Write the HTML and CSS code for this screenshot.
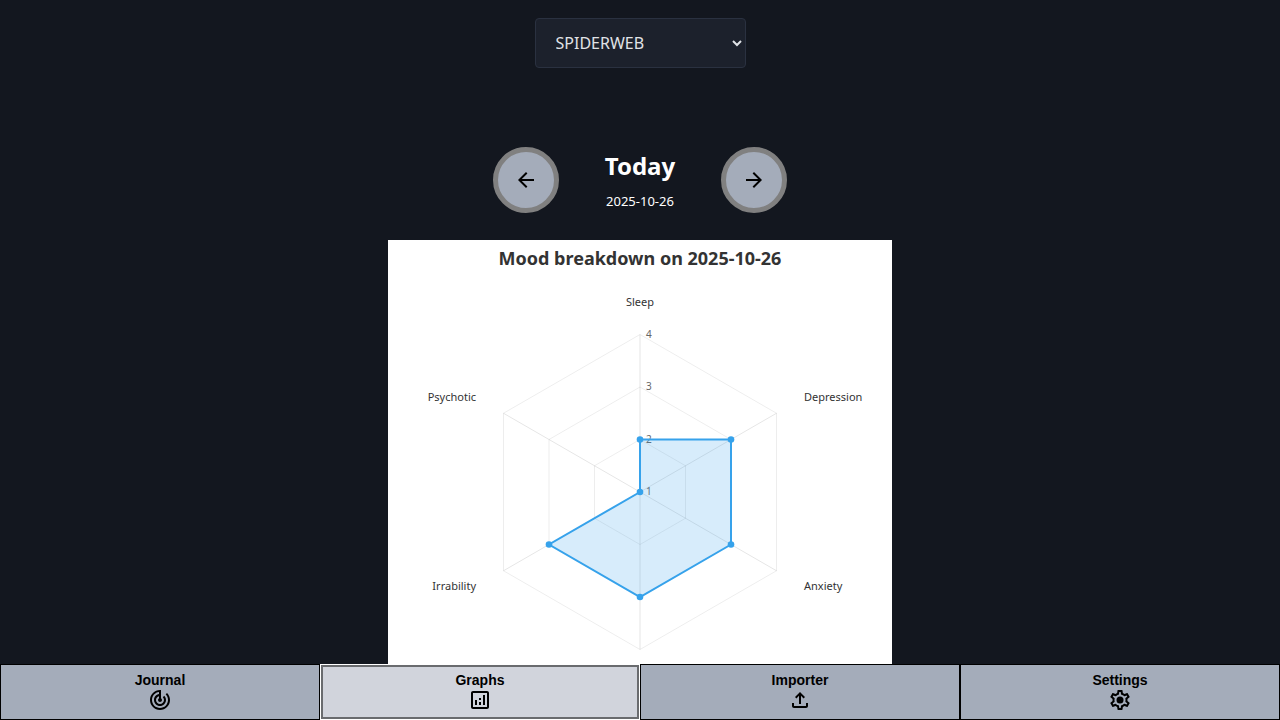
FILE: index.html
```html
<!DOCTYPE html>
<html lang="en">
<head>
<meta charset="utf-8">
<meta name="viewport" content="width=device-width, initial-scale=1">
<title>Graphs</title>
<link rel="stylesheet" href="styles.css">
</head>
<body>
<main class="page">
  <select class="graph-select" aria-label="Graph type">
    <option selected>SPIDERWEB</option>
    <option>LINE CHART</option>
  </select>
  <section class="day-picker">
    <button class="round-button" type="button" aria-label="Previous day">
      <svg class="icon" viewBox="0 0 24 24"><path d="M20 11H7.83l5.59-5.59L12 4l-8 8 8 8 1.41-1.41L7.83 13H20v-2z"/></svg>
    </button>
    <div class="day">
      <h2 class="day-name">Today</h2>
      <time class="day-date" datetime="2025-10-26">2025-10-26</time>
    </div>
    <button class="round-button" type="button" aria-label="Next day">
      <svg class="icon" viewBox="0 0 24 24"><path d="M12 4l-1.41 1.41L16.17 11H4v2h12.17l-5.58 5.59L12 20l8-8z"/></svg>
    </button>
  </section>
  <svg class="chart" viewBox="0 0 504 504" role="img" aria-label="Mood breakdown on 2025-10-26">
    <text class="chart-title" x="252" y="25">Mood breakdown on 2025-10-26</text>
    <g class="grid">
      <path d="M252 199.500L297.500 225.750V278.250L252 304.500L206.500 278.250V225.750Z"/>
      <path d="M252 147L343 199.500V304.500L252 357L161 304.500V199.500Z"/>
      <path d="M252 94.500L388.500 173.250V330.750L252 409.500L115.500 330.750V173.250Z"/>
      <path class="spokes" d="M252 94.500V409.500M388.500 173.250L115.500 330.750M388.500 330.750L115.500 173.250"/>
    </g>
    <g class="tick">
      <text x="258" y="98">4</text>
      <text x="258" y="150">3</text>
      <text x="258" y="203">2</text>
      <text x="258" y="255">1</text>
    </g>
    <path class="area" d="M252 199.500H343V304.500L252 357L161 304.500L252 252Z"/>
    <g class="point">
      <circle cx="252" cy="199.500" r="3.300"/>
      <circle cx="343" cy="199.500" r="3.300"/>
      <circle cx="343" cy="304.500" r="3.300"/>
      <circle cx="252" cy="357" r="3.300"/>
      <circle cx="161" cy="304.500" r="3.300"/>
      <circle cx="252" cy="252" r="3.300"/>
    </g>
    <g class="label">
      <text class="middle" x="252" y="66">Sleep</text>
      <text x="416" y="161">Depression</text>
      <text x="416" y="350">Anxiety</text>
      <text class="end" x="88" y="350">Irrability</text>
      <text class="end" x="88" y="161">Psychotic</text>
    </g>
  </svg>
</main>
<nav class="tabs" aria-label="Main">
  <button class="tab" type="button">Journal
    <svg class="icon" viewBox="0 0 24 24"><path d="M19.07 4.93l-1.41 1.41C19.1 7.79 20 9.79 20 12c0 4.42-3.58 8-8 8s-8-3.58-8-8c0-4.080 3.050-7.440 7-7.930v2.020C8.160 6.570 6 9.030 6 12c0 3.310 2.690 6 6 6s6-2.690 6-6c0-1.660-.67-3.160-1.760-4.240l-1.410 1.410C15.550 9.900 16 10.900 16 12c0 2.210-1.790 4-4 4s-4-1.790-4-4c0-1.860 1.280-3.410 3-3.860v2.140c-.6.350-1 .980-1 1.720 0 1.100.9 2 2 2s2-.9 2-2c0-.740-.4-1.380-1-1.720V2h-1C6.480 2 2 6.480 2 12s4.480 10 10 10 10-4.480 10-10c0-2.760-1.120-5.260-2.930-7.070z"/></svg>
  </button>
  <button class="tab active" type="button" aria-current="page">Graphs
    <svg class="icon" viewBox="0 0 24 24"><path fill-rule="evenodd" d="M19 3H5c-1.100 0-2 .9-2 2v14c0 1.100.9 2 2 2h14c1.100 0 2-.9 2-2V5c0-1.100-.9-2-2-2zM19 19H5V5h14v14zM7 12h2v5H7zM15 7h2v10h-2zM11 14h2v3h-2zM11 10h2v2h-2z"/></svg>
  </button>
  <button class="tab" type="button">Importer
    <svg class="icon" viewBox="0 0 24 24"><path d="M18 15v3H6v-3H4v3c0 1.100.9 2 2 2h12c1.100 0 2-.9 2-2v-3h-2zM7 9l1.410 1.410L11 7.830V16h2V7.830l2.590 2.580L17 9l-5-5-5 5z"/></svg>
  </button>
  <button class="tab" type="button">Settings
    <svg class="icon" viewBox="0 0 24 24"><path d="M19.43 12.98c.04-.32.07-.64.07-.98s-.03-.66-.07-.98l2.11-1.65c.19-.15.24-.42.12-.64l-2-3.46c-.09-.16-.26-.25-.44-.25-.06 0-.12.01-.17.03l-2.49 1c-.52-.4-1.08-.73-1.69-.98l-.38-2.65C14.46 2.18 14.25 2 14 2h-4c-.25 0-.46.18-.49.42l-.38 2.65c-.61.25-1.17.59-1.69.98l-2.49-1c-.06-.02-.12-.03-.18-.03-.17 0-.34.09-.43.25l-2 3.46c-.13.22-.07.49.12.64l2.11 1.65c-.04.32-.07.65-.07.98s.03.66.07.98l-2.11 1.65c-.19.15-.24.42-.12.64l2 3.46c.09.16.26.25.44.25.06 0 .12-.01.17-.03l2.49-1c.52.4 1.08.73 1.69.98l.38 2.65c.03.24.24.42.49.42h4c.25 0 .46-.18.49-.42l.38-2.65c.61-.25 1.17-.59 1.69-.98l2.49 1c.06.02.12.03.18.03.17 0 .34-.09.43-.25l2-3.46c.12-.22.07-.49-.12-.64l-2.11-1.65zm-1.98-1.71c.04.31.05.52.05.73s-.02.43-.05.73l-.14 1.13.89.7 1.08.84-.7 1.21-1.27-.51-1.04-.42-.9.68c-.43.32-.84.56-1.25.73l-1.06.43-.16 1.13-.2 1.35h-1.4l-.19-1.35-.16-1.13-1.06-.43c-.43-.18-.83-.41-1.23-.71l-.91-.7-1.06.43-1.27.51-.7-1.21 1.08-.84.89-.7-.14-1.13c-.03-.31-.05-.54-.05-.74s.02-.43.05-.73l.14-1.13-.89-.7-1.08-.84.7-1.21 1.27.51 1.04.42.9-.68c.43-.32.84-.56 1.25-.73l1.06-.43.16-1.13.2-1.35h1.39l.19 1.35.16 1.13 1.06.43c.43.18.83.41 1.23.71l.91.7 1.06-.43 1.27-.51.7 1.21-1.07.85-.89.7.14 1.13z"/><circle cx="12" cy="12" r="3.500"/></svg>
  </button>
</nav>
</body>
</html>
```

FILE: styles.css
```css
* {
  box-sizing: border-box;
}

body {
  display: flex;
  flex-direction: column;
  height: 100vh;
  margin: 0;
  background: #13171f;
  color: #fff;
  font-family: "Noto Sans", sans-serif;
}

.page {
  flex: 1;
  min-height: 0;
  display: flex;
  flex-direction: column;
  align-items: center;
  padding-top: 18px;
  overflow: hidden;
}

.graph-select {
  flex: none;
  width: 211px;
  height: 50px;
  padding: 0 0 0 16px;
  border: 1px solid #2a3140;
  border-radius: 4px;
  background: #1c212c;
  color: #e0e3e7;
  font: 16px/24px "Noto Sans", sans-serif;
}

.day-picker {
  flex: none;
  display: flex;
  align-items: center;
  gap: 46px;
  margin: 79px 0 27px;
}

.round-button {
  display: grid;
  place-items: center;
  width: 66px;
  height: 66px;
  padding: 0;
  border: 5px solid #808080;
  border-radius: 50%;
  background: #a4acba;
  color: #000;
}

.icon {
  display: block;
  width: 24px;
  height: 24px;
  fill: currentColor;
}

.day {
  text-align: center;
}

.day-name {
  margin: 0 0 8px;
  font-size: 24px;
  line-height: 34px;
}

.day-date {
  display: block;
  font-size: 13px;
  line-height: 20px;
}

.chart {
  flex: none;
  display: block;
  width: 100%;
  max-width: 504px;
  background: #fff;
}

.chart-title {
  font-size: 18px;
  font-weight: bold;
  text-anchor: middle;
  fill: #333;
}

.grid {
  fill: none;
  stroke: #000;
  stroke-opacity: 0.07;
}

.spokes {
  stroke-opacity: 0.1;
}

.tick {
  font-size: 10px;
  fill: #666;
}

.area {
  fill: #36a2eb;
  fill-opacity: 0.2;
  stroke: #36a2eb;
  stroke-width: 2;
}

.point {
  fill: #36a2eb;
}

.label {
  font-size: 11px;
  fill: #333;
}

.middle {
  text-anchor: middle;
}

.end {
  text-anchor: end;
}

.tabs {
  flex: none;
  display: grid;
  grid-template-columns: repeat(4, 1fr);
}

.tab {
  display: flex;
  flex-direction: column;
  align-items: center;
  padding: 7px;
  border: 1px solid #000;
  background: #a4acba;
  color: #000;
  font: bold 14px/16px "Liberation Sans", sans-serif;
}

.tab.active {
  border-color: #fff;
  background: #d1d4dc;
  box-shadow: inset 0 0 0 2px #696b6e;
}
```
